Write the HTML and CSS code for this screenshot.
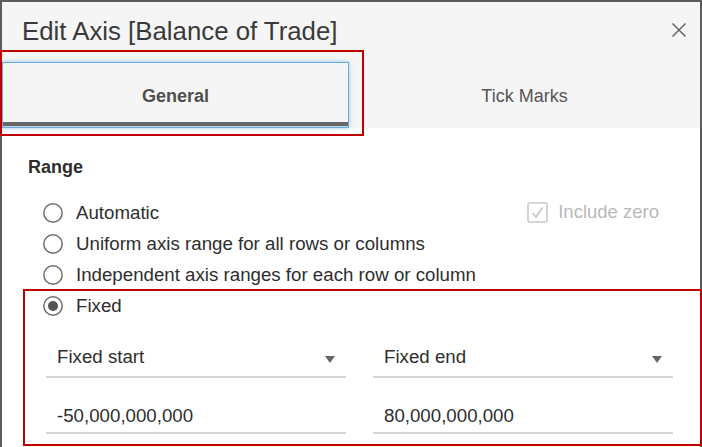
FILE: index.html
```html
<!DOCTYPE html>
<html lang="en">
<head>
<meta charset="utf-8">
<title>Edit Axis</title>
<link rel="stylesheet" href="styles.css">
</head>
<body>
<div class="frame">
  <div class="dialog">
    <div class="header">
      <div class="title-row">
        <div class="title">Edit Axis [Balance of Trade]</div>
        <svg class="close" width="16" height="16" viewBox="0 0 16 16"><path d="M1.5 1.5 L14.5 14.5 M14.5 1.5 L1.5 14.5" stroke="#666" stroke-width="1.5" fill="none"/></svg>
      </div>
      <div class="tabs">
        <div class="tab tab-active">
          <div class="tab-label">General</div>
          <div class="tab-bar"></div>
          <div class="tab-bar-light"></div>
        </div>
        <div class="tab">
          <div class="tab-label">Tick Marks</div>
        </div>
      </div>
    </div>
    <div class="content">
      <div class="section-title">Range</div>
      <div class="options">
        <div class="option">
          <svg class="radio" width="20" height="20" viewBox="0 0 20 20"><circle cx="10" cy="10" r="9.2" fill="#fff" stroke="#6e6e6e" stroke-width="1.5"/></svg>
          <span class="label">Automatic</span>
          <span class="include">
            <svg width="21" height="21" viewBox="0 0 21 21"><rect x="1" y="1" width="19" height="19" rx="1.5" fill="#fff" stroke="#c9c9c9" stroke-width="1.6"/><path d="M5.5 11 L9 15 L15.5 5.5" stroke="#c4c4c4" stroke-width="1.6" fill="none"/></svg>
            <span class="include-label">Include zero</span>
          </span>
        </div>
        <div class="option">
          <svg class="radio" width="20" height="20" viewBox="0 0 20 20"><circle cx="10" cy="10" r="9.2" fill="#fff" stroke="#6e6e6e" stroke-width="1.5"/></svg>
          <span class="label">Uniform axis range for all rows or columns</span>
        </div>
        <div class="option">
          <svg class="radio" width="20" height="20" viewBox="0 0 20 20"><circle cx="10" cy="10" r="9.2" fill="#fff" stroke="#6e6e6e" stroke-width="1.5"/></svg>
          <span class="label">Independent axis ranges for each row or column</span>
        </div>
        <div class="option">
          <svg class="radio" width="20" height="20" viewBox="0 0 20 20"><circle cx="10" cy="10" r="9.2" fill="#fff" stroke="#6e6e6e" stroke-width="1.5"/><circle cx="10" cy="10" r="5" fill="#555"/></svg>
          <span class="label">Fixed</span>
        </div>
      </div>
      <div class="fields">
        <div class="field dropdown">
          <span>Fixed start</span>
          <svg class="caret" width="10" height="7" viewBox="0 0 10 7"><polygon points="0,0 10,0 5,7" fill="#666"/></svg>
        </div>
        <div class="field dropdown">
          <span>Fixed end</span>
          <svg class="caret" width="10" height="7" viewBox="0 0 10 7"><polygon points="0,0 10,0 5,7" fill="#666"/></svg>
        </div>
        <div class="field value">-50,000,000,000</div>
        <div class="field value">80,000,000,000</div>
      </div>
    </div>
  </div>
  <div class="mark mark-tab"></div>
  <div class="mark mark-fixed"></div>
</div>
</body>
</html>
```
FILE: styles.css
```css
html, body {
  margin: 0;
  padding: 0;
  background: #fff;
}
body {
  font-family: "Liberation Sans", Arial, sans-serif;
  color: #333;
}
.frame {
  position: relative;
  width: 702px;
  height: 447px;
  overflow: hidden;
}
.dialog {
  box-sizing: border-box;
  width: 702px;
  height: 447px;
  border: 2px solid #5c5c5c;
  border-bottom: none;
  background: #fff;
}
.header {
  background: #f5f5f5;
  height: 126px;
  display: flex;
  flex-direction: column;
}
.title-row {
  display: flex;
  justify-content: space-between;
  align-items: flex-start;
  padding: 14px 13px 0 20px;
}
.title {
  font-size: 25.8px;
  line-height: 30px;
  color: #3a3a3a;
}
.close {
  margin-top: 6px;
}
.tabs {
  display: flex;
  margin-top: 16px;
  height: 66px;
}
.tab {
  box-sizing: border-box;
  display: flex;
  flex-direction: column;
  flex: 1;
  height: 66px;
}
.tab-active {
  flex: 0 0 347px;
  border: 1px solid #63aee4;
  box-shadow: 0 0 4px rgba(70, 155, 225, 0.55);
  background: #f5f5f5;
}
.tab-label {
  flex: 1;
  display: flex;
  align-items: center;
  justify-content: center;
  padding-top: 1px;
  font-size: 18px;
  line-height: 22px;
  color: #555;
}
.tab-active .tab-label {
  font-weight: bold;
  color: #4f4f4f;
  padding-top: 6px;
}
.tab-bar {
  height: 4px;
  background: #676767;
}
.tab-bar-light {
  height: 1px;
  background: #cfcfcf;
}
.content {
  padding: 28px 0 0 26px;
}
.section-title {
  font-size: 18px;
  font-weight: bold;
  line-height: 22px;
  color: #2e2e2e;
  margin-bottom: 19px;
}
.options {
  margin-left: 15px;
}
.option {
  display: flex;
  align-items: center;
  height: 31px;
  font-size: 18.7px;
}
.radio {
  flex: 0 0 20px;
}
.label {
  margin-left: 13px;
  color: #2e2e2e;
}
.include {
  margin-left: auto;
  margin-right: 41px;
  display: flex;
  align-items: center;
  gap: 10px;
  margin-top: -1px;
  font-size: 18.5px;
}
.include-label {
  color: #b9b9b9;
}
.fields {
  display: grid;
  grid-template-columns: 300px 300px;
  column-gap: 27px;
  row-gap: 21px;
  margin: 16px 0 0 18px;
}
.field {
  box-sizing: border-box;
  display: flex;
  align-items: center;
  padding: 0 11px 0 11px;
  border-bottom: 2px solid #d6d6d6;
  font-size: 18.7px;
  color: #2e2e2e;
}
.dropdown {
  height: 41px;
  justify-content: space-between;
}
.caret {
  margin-top: 6px;
}
.value {
  height: 35px;
}
.mark {
  position: absolute;
  box-sizing: border-box;
  border: 2px solid #c00000;
  pointer-events: none;
}
.mark-tab {
  left: 0;
  top: 50px;
  width: 364px;
  height: 86px;
}
.mark-fixed {
  left: 23px;
  top: 289px;
  width: 679px;
  height: 157px;
}
```
